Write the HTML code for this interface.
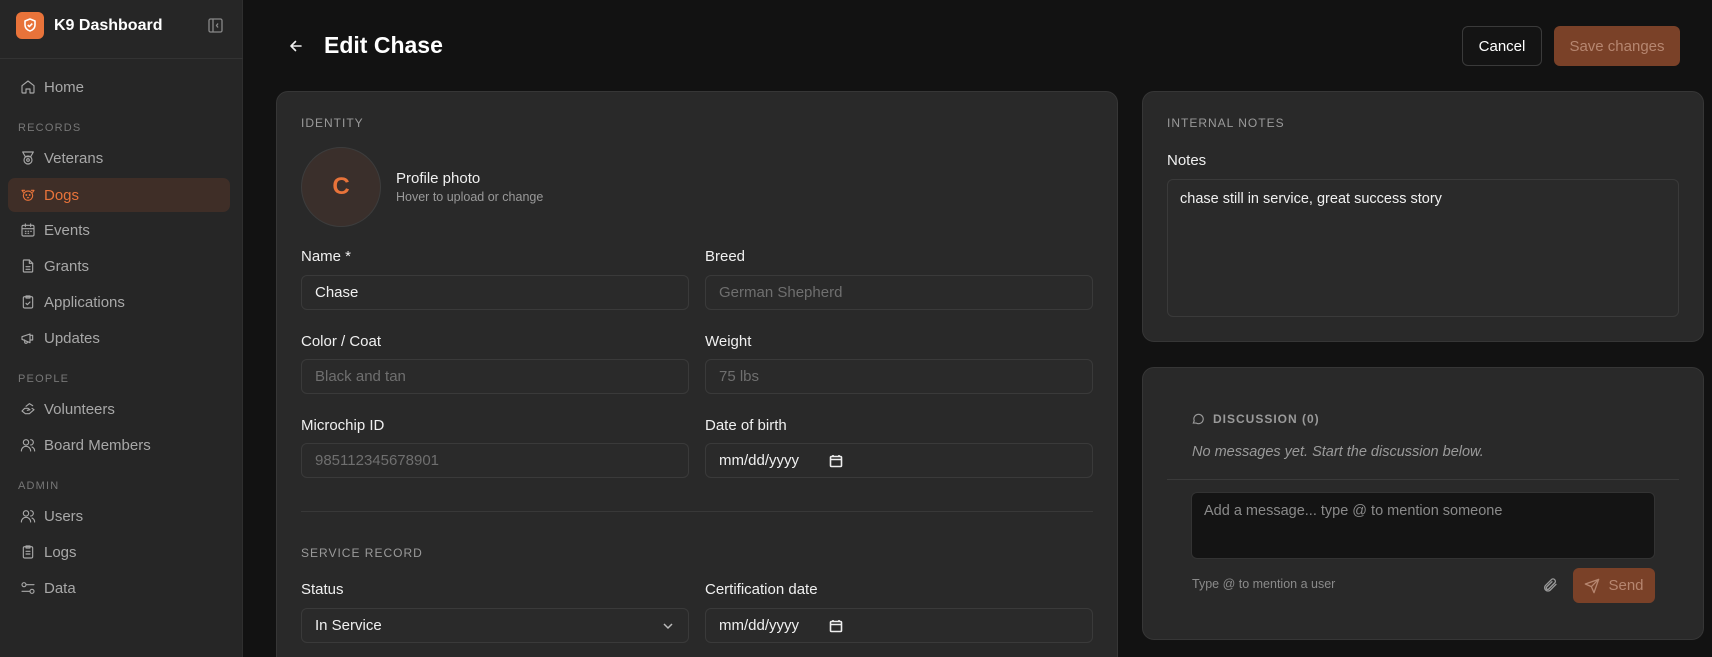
<!DOCTYPE html>
<html style="height:657px;overflow:hidden"><head><meta charset="utf-8"><style>
*{box-sizing:border-box;margin:0;padding:0}
body{width:1712px;height:657px;overflow:hidden;background:#121212;font-family:"Liberation Sans",sans-serif;color:#eee;position:relative}
.abs{position:absolute}
.sb{left:0;top:0;width:243px;height:657px;background:#262626;border-right:1px solid #2f2f2f}
.nav{position:absolute;left:8px;width:222px;height:34px;display:flex;align-items:center;padding-left:12px;font-size:15px;color:#a8a8a8;border-radius:7px}
.nav svg{width:16px;height:16px;margin-right:8px;stroke:currentColor;fill:none;stroke-width:1.7;stroke-linecap:round;stroke-linejoin:round}
.sec{position:absolute;left:18px;font-size:11px;letter-spacing:1.2px;color:#777}
.card{position:absolute;background:#292929;border:1px solid #363636;border-radius:12px}
.cap{position:absolute;font-size:12px;letter-spacing:1px;color:#9a9a9a}
.lbl{position:absolute;font-size:15px;color:#f0f0f0}
.inp{position:absolute;height:35px;border:1px solid #3a3a3a;border-radius:6px;background:#2a2a2a;font-size:15px;color:#6f6f6f;padding-left:13px;display:flex;align-items:center;overflow:hidden}
</style></head><body>
<div class="abs sb"></div>
<div class="abs" style="left:16px;top:12px;width:28px;height:27px;background:#e8733a;border-radius:6px"><svg width="28" height="27" viewBox="0 0 28 27" fill="none" stroke="#fff" stroke-width="1.6" stroke-linejoin="round"><path d="M14 7l5 2v4c0 3-2.2 5-5 6-2.8-1-5-3-5-6V9z"/><path d="M11.7 13l1.6 1.6 3-3"/></svg></div>
<div class="abs" style="left:54px;top:17px;font-size:16px;font-weight:bold;color:#fff">K9 Dashboard</div>
<svg class="abs" style="left:208px;top:18px" width="15" height="15" viewBox="0 0 15 15" fill="none" stroke="#888" stroke-width="1.3"><rect x="1" y="1" width="13" height="13" rx="1.5"/><path d="M5 1v13M10 5.5L8.5 7.5 10 9.5"/></svg>
<div class="abs" style="left:0;top:58px;width:243px;height:1px;background:#333"></div>

<div class="nav" style="top:70px"><svg viewBox="0 0 24 24"><path d="M3 10l9-7 9 7v10a1 1 0 0 1-1 1h-5v-6H9v6H4a1 1 0 0 1-1-1z"/></svg>Home</div>
<div class="sec" style="top:122px">RECORDS</div>
<div class="nav" style="top:141px"><svg viewBox="0 0 24 24"><path d="M4 3h16l-4 7H8z"/><circle cx="12" cy="15" r="6"/><circle cx="12" cy="15" r="2"/></svg>Veterans</div>
<div class="nav" style="top:178px;background:#3f2e27;color:#e8733a"><svg viewBox="0 0 24 24"><circle cx="12" cy="13" r="7"/><path d="M5 8L3 5l4 0M19 8l2-3-4 0"/><circle cx="9.5" cy="12" r=".6"/><circle cx="14.5" cy="12" r=".6"/><path d="M11 16h2"/></svg>Dogs</div>
<div class="nav" style="top:213px"><svg viewBox="0 0 24 24"><rect x="3" y="5" width="18" height="16" rx="2"/><path d="M3 10h18M8 3v4M16 3v4M8 14h1M12 14h1M16 14h1M8 17h1M12 17h1"/></svg>Events</div>
<div class="nav" style="top:249px"><svg viewBox="0 0 24 24"><path d="M14 3H6a1 1 0 0 0-1 1v16a1 1 0 0 0 1 1h12a1 1 0 0 0 1-1V8z"/><path d="M14 3v5h5M9 13h6M9 17h6"/></svg>Grants</div>
<div class="nav" style="top:285px"><svg viewBox="0 0 24 24"><rect x="5" y="4" width="14" height="17" rx="2"/><path d="M9 3h6v3H9zM9 14l2 2 4-4"/></svg>Applications</div>
<div class="nav" style="top:321px"><svg viewBox="0 0 24 24"><path d="M3 11v3l12 5V6L3 10zM7 15v3a2 2 0 0 0 4 0"/><path d="M15 8h4v7h-4"/></svg>Updates</div>
<div class="sec" style="top:373px">PEOPLE</div>
<div class="nav" style="top:392px"><svg viewBox="0 0 24 24"><path d="M3 15l4-4h5l3 2-4 1M3 15l5 4h6l7-6-3-2"/><path d="M9 8l5-4 5 3"/></svg>Volunteers</div>
<div class="nav" style="top:428px"><svg viewBox="0 0 24 24"><circle cx="9" cy="8" r="4"/><path d="M2 21a7 7 0 0 1 14 0M16 4a4 4 0 0 1 0 8M22 21a7 7 0 0 0-4-6"/></svg>Board Members</div>
<div class="sec" style="top:480px">ADMIN</div>
<div class="nav" style="top:499px"><svg viewBox="0 0 24 24"><circle cx="9" cy="8" r="4"/><path d="M2 21a7 7 0 0 1 14 0M16 4a4 4 0 0 1 0 8M22 21a7 7 0 0 0-4-6"/></svg>Users</div>
<div class="nav" style="top:535px"><svg viewBox="0 0 24 24"><rect x="5" y="4" width="14" height="17" rx="2"/><path d="M9 3h6v3H9zM9 11h6M9 15h6"/></svg>Logs</div>
<div class="nav" style="top:571px"><svg viewBox="0 0 24 24"><path d="M10 7h11M3 17h11"/><circle cx="6" cy="7" r="3"/><circle cx="18" cy="17" r="3"/></svg>Data</div>

<svg class="abs" style="left:288px;top:38px" width="16" height="16" viewBox="0 0 16 16" fill="none" stroke="#eee" stroke-width="1.6" stroke-linecap="round" stroke-linejoin="round"><path d="M13 8H3M7.5 3.5L3 8l4.5 4.5"/></svg>
<div class="abs" style="left:324px;top:32px;font-size:23px;font-weight:bold;color:#fff">Edit Chase</div>
<div class="abs" style="left:1462px;top:26px;width:80px;height:40px;border:1px solid #3a3a3a;border-radius:6px;background:#141414;font-size:15px;display:flex;align-items:center;justify-content:center;color:#fff">Cancel</div>
<div class="abs" style="left:1554px;top:26px;width:126px;height:40px;border-radius:6px;background:#7a4128;font-size:15px;display:flex;align-items:center;justify-content:center;color:#b68670">Save changes</div>

<div class="card" style="left:276px;top:91px;width:842px;height:590px"></div>
<div class="cap" style="left:301px;top:116px">IDENTITY</div>
<div class="abs" style="left:301px;top:147px;width:80px;height:80px;border-radius:50%;background:#3a2f2b;border:1px solid #3d3d3d;display:flex;align-items:center;justify-content:center;font-size:24px;font-weight:bold;color:#e8733a">C</div>
<div class="abs" style="left:396px;top:170px;font-size:15px;color:#f0f0f0">Profile photo</div>
<div class="abs" style="left:396px;top:190px;font-size:12.5px;color:#999">Hover to upload or change</div>
<div class="lbl" style="left:301px;top:248px">Name *</div>
<div class="lbl" style="left:705px;top:248px">Breed</div>
<div class="inp" style="left:301px;top:275px;width:388px;color:#f0f0f0">Chase</div>
<div class="inp" style="left:705px;top:275px;width:388px">German Shepherd</div>
<div class="lbl" style="left:301px;top:333px">Color / Coat</div>
<div class="lbl" style="left:705px;top:333px">Weight</div>
<div class="inp" style="left:301px;top:359px;width:388px">Black and tan</div>
<div class="inp" style="left:705px;top:359px;width:388px">75 lbs</div>
<div class="lbl" style="left:301px;top:417px">Microchip ID</div>
<div class="lbl" style="left:705px;top:417px">Date of birth</div>
<div class="inp" style="left:301px;top:443px;width:388px">985112345678901</div>
<div class="inp" style="left:705px;top:443px;width:388px;color:#f0f0f0">mm/dd/yyyy<svg style="position:absolute;left:123px;top:10px" width="14" height="14" viewBox="0 0 14 14" fill="none" stroke="#eee" stroke-width="1.6"><rect x="1.5" y="2.5" width="11" height="10" rx="1"/><path d="M1.5 5.5h11M4 1v2M10 1v2"/></svg></div>
<div class="abs" style="left:301px;top:511px;width:792px;height:1px;background:#383838"></div>
<div class="cap" style="left:301px;top:546px">SERVICE RECORD</div>
<div class="lbl" style="left:301px;top:581px">Status</div>
<div class="lbl" style="left:705px;top:581px">Certification date</div>
<div class="inp" style="left:301px;top:608px;width:388px;color:#f0f0f0">In Service<svg style="position:absolute;right:14px;top:12px" width="12" height="10" viewBox="0 0 12 10" fill="none" stroke="#bbb" stroke-width="1.5"><path d="M2 3l4 4 4-4"/></svg></div>
<div class="inp" style="left:705px;top:608px;width:388px;color:#f0f0f0">mm/dd/yyyy<svg style="position:absolute;left:123px;top:10px" width="14" height="14" viewBox="0 0 14 14" fill="none" stroke="#eee" stroke-width="1.6"><rect x="1.5" y="2.5" width="11" height="10" rx="1"/><path d="M1.5 5.5h11M4 1v2M10 1v2"/></svg></div>

<div class="card" style="left:1142px;top:91px;width:562px;height:251px"></div>
<div class="cap" style="left:1167px;top:116px">INTERNAL NOTES</div>
<div class="lbl" style="left:1167px;top:152px">Notes</div>
<div class="abs" style="left:1167px;top:179px;width:512px;height:138px;border:1px solid #3a3a3a;border-radius:6px;background:#2a2a2a;font-size:14.5px;color:#f0f0f0;padding:11px 12px">chase still in service, great success story</div>

<div class="card" style="left:1142px;top:367px;width:562px;height:273px"></div>
<svg class="abs" style="left:1191px;top:412px" width="14" height="14" viewBox="0 0 24 24" fill="none" stroke="#999" stroke-width="2"><path d="M4 19l1.5-4A8 8 0 1 1 9 19z"/></svg>
<div class="cap" style="left:1213px;top:412px;font-weight:bold">DISCUSSION (0)</div>
<div class="abs" style="left:1192px;top:444px;font-size:14.5px;font-style:italic;color:#9a9a9a">No messages yet. Start the discussion below.</div>
<div class="abs" style="left:1167px;top:479px;width:512px;height:1px;background:#3a3a3a"></div>
<div class="abs" style="left:1191px;top:492px;width:464px;height:67px;border:1px solid #333;border-radius:6px;background:#141414;font-size:14.5px;color:#8a8a8a;padding:10px 12px">Add a message... type @ to mention someone</div>
<div class="abs" style="left:1192px;top:577px;font-size:12.5px;color:#8a8a8a">Type @ to mention a user</div>
<svg class="abs" style="left:1542px;top:577px" width="16" height="16" viewBox="0 0 24 24" fill="none" stroke="#999" stroke-width="2" stroke-linecap="round"><path d="M21 11l-9 9a5 5 0 0 1-7-7l9-9a3.5 3.5 0 0 1 5 5l-9 9a2 2 0 0 1-3-3l8-8"/></svg>
<div class="abs" style="left:1573px;top:568px;width:82px;height:35px;border-radius:6px;background:#7a4128;color:#b68670;font-size:15px;display:flex;align-items:center;justify-content:center"><svg width="16" height="16" viewBox="0 0 24 24" fill="none" stroke="#b68670" stroke-width="2" stroke-linejoin="round" style="margin-right:8px"><path d="M22 2L11 13M22 2l-7 20-4-9-9-4z"/></svg>Send</div>
</body></html>
